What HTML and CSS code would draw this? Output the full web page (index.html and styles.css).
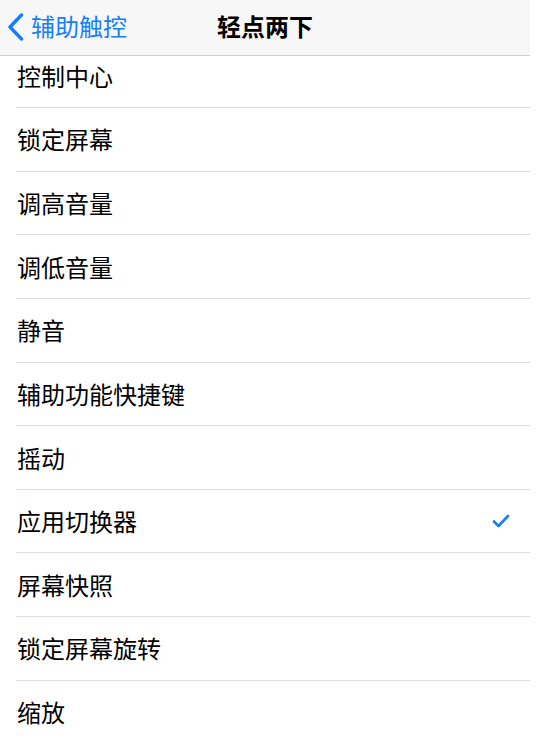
FILE: index.html
```html
<!DOCTYPE html>
<html>
<head>
    <meta charset="UTF-8">
    <title>轻点两下</title>
    <link rel="stylesheet" href="styles.css">
</head>
<body>
<div id="screen">
    <div class="navbar">
        <a class="back" href="#">
            <svg width="20" height="28" viewBox="0 0 20 28"><path d="M15.5 2 L4 14 L15.5 26" fill="none" stroke="#157efb" stroke-width="3.4" stroke-linecap="round" stroke-linejoin="round"/></svg>
            <span>辅助触控</span>
        </a>
        <div class="title">轻点两下</div>
    </div>
    <div class="scroll">
        <ul id="list">
            <li>控制中心</li>
            <li>锁定屏幕</li>
            <li>调高音量</li>
            <li>调低音量</li>
            <li>静音</li>
            <li>辅助功能快捷键</li>
            <li>摇动</li>
            <li class="checked">应用切换器
                <svg class="tick" width="18" height="14" viewBox="0 0 18 14"><path d="M2 7.5 L6.5 12 L16 2" fill="none" stroke="#157efb" stroke-width="2.6" stroke-linecap="round" stroke-linejoin="round"/></svg>
            </li>
            <li>屏幕快照</li>
            <li>锁定屏幕旋转</li>
            <li>缩放</li>
        </ul>
    </div>
</div>
</body>
</html>
```

FILE: styles.css
```css
html,
body {
    margin: 0;
    padding: 0;
    background: #fff;
    height: 100%;
    overflow: hidden;
}

#screen {
    width: 530px;
    height: 743px;
    font-family: "Noto Sans CJK SC", "Noto Sans", sans-serif;
    color: #000;
}

.navbar {
    height: 55px;
    background: #f7f7f7;
    border-bottom: 1px solid #cfcfcf;
    display: flex;
    align-items: center;
    justify-content: center;
    position: relative;
}

.back {
    position: absolute;
    left: 6px;
    top: 0;
    height: 55px;
    display: flex;
    align-items: center;
    gap: 5px;
    color: #157efb;
    text-decoration: none;
    font-size: 24px;
    line-height: 1;
}

.back svg {
    display: block;
    margin-top: -2px;
}

.back span {
    margin-top: -4px;
}

.title {
    font-size: 24px;
    font-weight: 600;
    line-height: 1;
    margin-top: -4px;
}

.scroll {
    overflow: hidden;
    height: 687px;
}

ul {
    margin: -11.65px 0 0 0;
    padding: 0;
    list-style: none;
}

#list li {
    margin-left: 16px;
    padding: 0 20px 0 1px;
    height: 62.65px;
    border-bottom: 1px solid #dcdcdc;
    display: flex;
    align-items: center;
    justify-content: space-between;
    font-size: 24px;
    line-height: 1;
}

#list li:last-child {
    border-bottom: none;
}

.tick {
    display: block;
}
```
